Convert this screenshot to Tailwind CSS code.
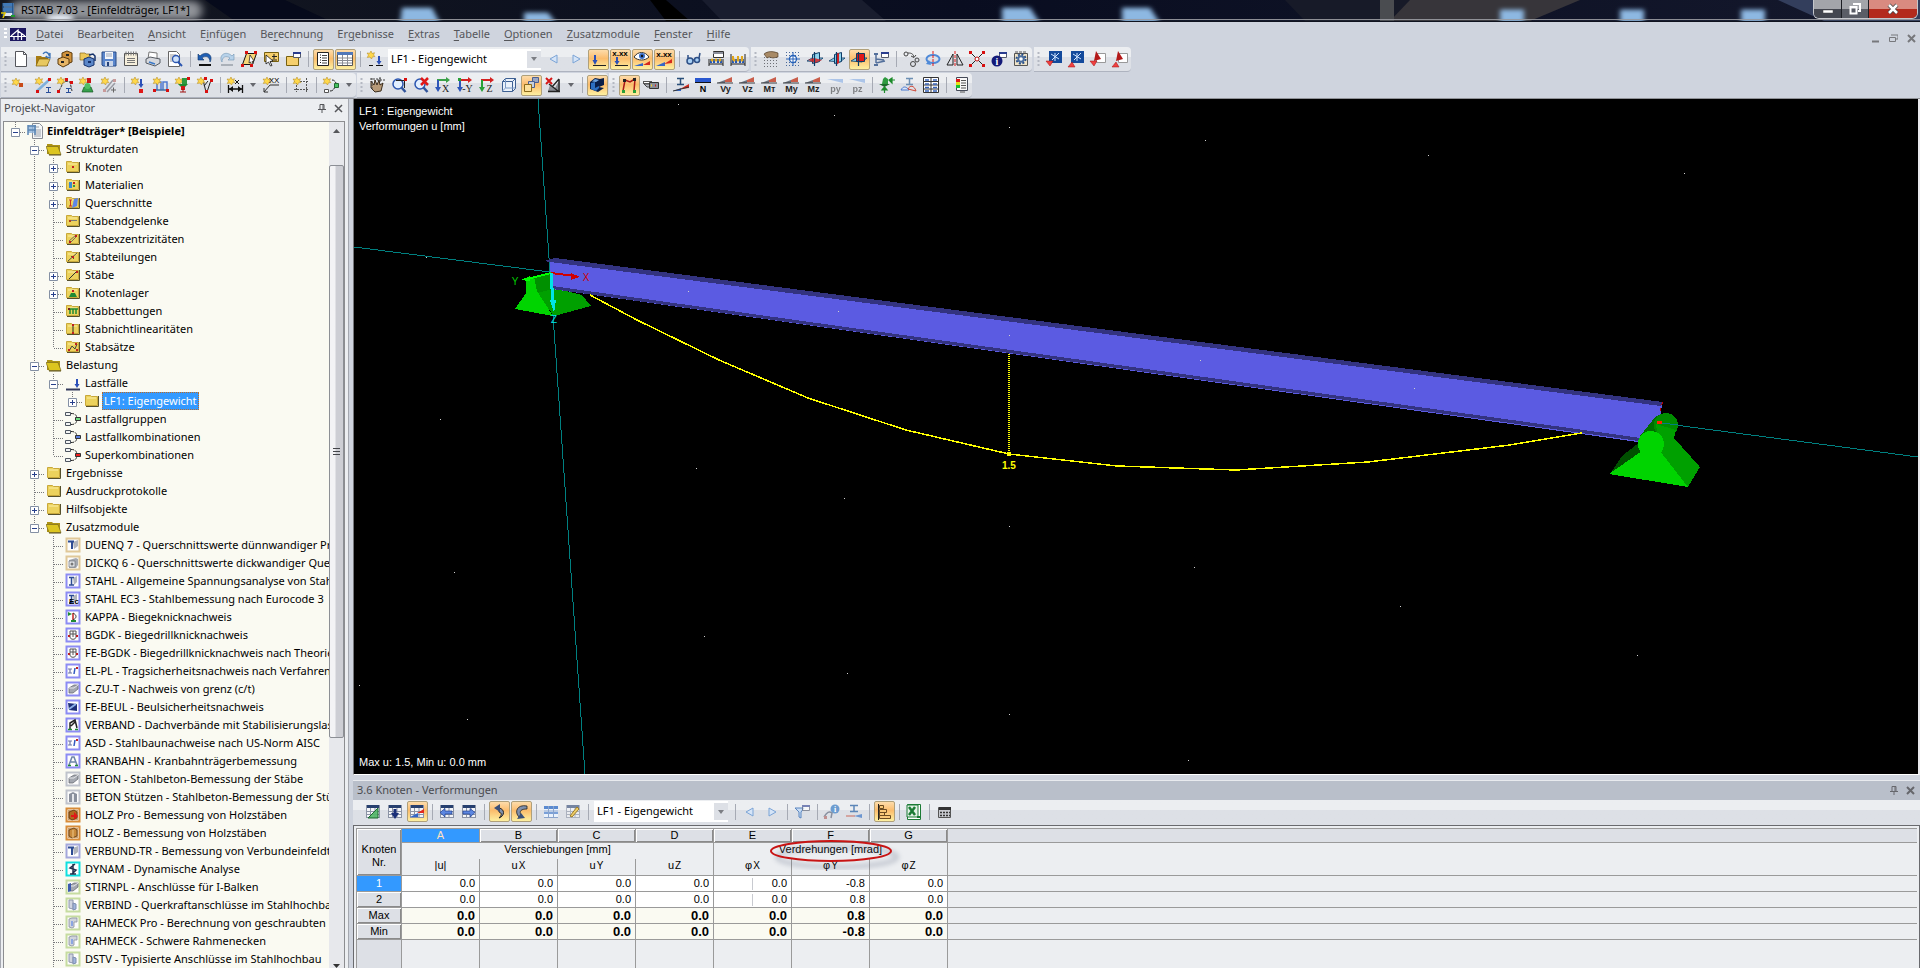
<!DOCTYPE html>
<html lang="de">
    <head>
        <meta charset="UTF-8">
        <meta name="viewport" content="width=device-width, initial-scale=1">
        <title>RSTAB 7.03 - [Einfeldträger, LF1*]</title>
        <script src="https://cdn.jsdelivr.net/npm/@tailwindcss/browser@4"></script>
    </head>
    <body class="h-screen flex flex-col overflow-hidden bg-[#cfd4de] font-['Noto_Sans','Open_Sans',sans-serif] text-[11px] text-black">
        <!-- Title bar -->
        <header class="relative h-[22px] shrink-0 overflow-hidden bg-linear-to-r from-[#14171f] via-[#090d20] to-[#14182c] border-b border-[#10131f]">
            <svg class="absolute inset-0 w-full h-full" viewBox="0 0 1920 22" preserveAspectRatio="none" aria-hidden="true">
                <defs>
                    <filter id="soft" x="-30%" y="-50%" width="160%" height="200%"><feGaussianBlur stdDeviation="2.500"/></filter>
                    <filter id="wide" x="-20%" y="-80%" width="140%" height="260%"><feGaussianBlur stdDeviation="4"/></filter>
                </defs>
                <path d="M205 0h80l45 22H235z" fill="#060a1b"/>
                <path d="M650 0h16l24 22h-24z" fill="#000"/>
                <path d="M702 0h160l24 22H722z" fill="#191d2e"/>
                <path d="M1285 0h160l-40 22h-100z" fill="#171a28"/>
                <path d="M1410 0h170l-50 22H1390z" fill="#37353a"/>
                <path d="M1380 0h14v22h-14z" fill="#4a4c50"/>
                <path d="M1778 0h142v22h-96z" fill="#333e5c"/>
                <g filter="url(#soft)" fill="#8db8e2">
                    <path d="M402 8h30l8 16h-40z"/>
                    <path d="M524 13h24l8 11h-32z"/>
                    <path d="M1002 8h28l10 16h-38z"/>
                    <path d="M1122 8h28l10 16h-38z"/>
                    <path d="M1500 10h24v14h-24z"/>
                    <path d="M1620 10h24v14h-24z"/>
                    <path d="M1741 10h24v14h-24z"/>
                </g>
                <rect x="10" y="1" width="192" height="20" rx="9" fill="#909398" filter="url(#wide)"/>
                <ellipse cx="60" cy="19" rx="14" ry="4" fill="#e8eef6" filter="url(#soft)"/>
                <path d="M0 20.500h1920" stroke="#9a9ba0"/>
            </svg>
            <div class="relative flex h-5 items-center justify-between">
                <h1 class="flex items-center gap-[5px] leading-5">
                    <svg class="w-4 h-4" viewBox="0 0 16 16" aria-hidden="true">
                        <path d="M3 1h11v13H3z" fill="#dfe8f4"/>
                        <path d="M4 1h9v3H4zM4 6h9v3H4z" fill="#3f79b8"/>
                        <path d="M3 1v13M13 1v13M3 5h10M3 10h10" stroke="#1d4c82" stroke-width="1.500" fill="none"/>
                        <path d="M11 14h4" stroke="#1f9a2f" stroke-width="2"/>
                        <path d="M1 11h4l-2 5" stroke="#e0c400" stroke-width="1.500" fill="none"/>
                    </svg>
                    <span>RSTAB 7.03 - [Einfeldträger, LF1*]</span>
                </h1>
                <div class="flex h-[19px] self-start mr-0.5 rounded-b-md border border-t-0 border-[#c5c7cc] overflow-hidden">
                    <button aria-label="Minimieren" class="w-[28px] flex justify-center items-center bg-linear-to-b from-[#a3a5aa] from-50% to-[#43464f] to-50% border-r border-[#1c1e24]"><svg class="w-3 h-3" viewBox="0 0 12 12"><path d="M1 7h10v3H1z" fill="#fff" stroke="#444" stroke-width=".5"/></svg></button>
                    <button aria-label="Wiederherstellen" class="w-[27px] flex justify-center items-center bg-linear-to-b from-[#a3a5aa] from-50% to-[#5a5d66] to-50% border-r border-[#1c1e24]"><svg class="w-3 h-3" viewBox="0 0 12 12"><path d="M4 1h7v7h-2M1.500 4h6v6.500h-6z" fill="none" stroke="#fff" stroke-width="2"/></svg></button>
                    <button aria-label="Schließen" class="w-[48px] flex justify-center items-center bg-linear-to-b from-[#d98a80] from-50% to-[#b32a1c] to-50%"><svg class="w-3 h-3" viewBox="0 0 12 12"><path d="M2 2l8 8M10 2l-8 8" stroke="#444" stroke-width="4"/><path d="M2 2l8 8M10 2l-8 8" stroke="#fff" stroke-width="2.500"/></svg></button>
                </div>
            </div>
        </header>

        <!-- Menu -->
        <nav class="flex h-6 shrink-0 items-center pl-1 text-[#55565a]">
            <svg class="w-[3px] h-3 mr-[3px]" viewBox="0 0 3 12" aria-hidden="true"><path d="M1.500 0v12" stroke="#fff" stroke-width="3" stroke-dasharray="2 2"/></svg>
            <svg class="w-4 h-[13px] mr-[3px]" viewBox="0 0 16 13" aria-hidden="true">
                <path d="M0 0h16v13H0z" fill="#1b1660"/>
                <path d="M0 8.500h16M1 8l7-6v10M8 3l7 5M11.500 5v7M4 8v4" stroke="#fff" stroke-width="1.200" fill="none"/>
            </svg>
            <div id="menu" class="flex"></div>
            <div class="ml-auto mr-1 mt-2 flex gap-[9px]">
                <button aria-label="Fenster minimieren"><svg class="block w-[8px] h-[9px]" viewBox="0 0 8 9"><path d="M0 7.500h7" stroke="#77787c" stroke-width="2"/></svg></button>
                <button aria-label="Fenster wiederherstellen"><svg class="block w-[9px] h-[9px]" viewBox="0 0 9 9"><path d="M2 1h7v4H7M.5 3.500h6v4h-6z" fill="none" stroke="#77787c"/></svg></button>
                <button aria-label="Fenster schließen"><svg class="block w-[9px] h-[9px]" viewBox="0 0 9 9"><path d="M1 1l7 7M8 1L1 8" stroke="#77787c" stroke-width="2"/></svg></button>
            </div>
        </nav>

        <!-- Toolbars -->
        <div id="toolbar1" class="flex h-[26px] shrink-0 gap-0.5 pl-px pt-px"></div>
        <div id="toolbar2" class="flex h-[26px] shrink-0 gap-px pl-px pt-px"></div>

        <main class="flex grow min-h-0 border-t border-[#8f9196]">
            <!-- Navigator -->
            <aside class="w-[349px] shrink-0 flex flex-col bg-[#eceef1] border-l border-r border-[#a5a8b0]">
                <div class="flex h-[19px] mb-[3px] shrink-0 items-center justify-between pl-[3px] pr-[5px] text-[#4a4b50]">
                    <h2>Projekt-Navigator</h2>
                    <div class="flex gap-2 items-center">
                        <button aria-label="Anheften"><svg class="block w-2 h-[9px]" viewBox="0 0 8 9"><path d="M2 0.500h4v5H2zM5 0v6M0 5.500h8M4 6v3" stroke="#55565a" fill="none"/></svg></button>
                        <button aria-label="Navigator schließen"><svg class="block w-[9px] h-[9px]" viewBox="0 0 9 9"><path d="M1 1l7 7M8 1L1 8" stroke="#55565a" stroke-width="1.500"/></svg></button>
                    </div>
                </div>
                <div class="grow min-h-0 flex ml-[2px] mr-[3px] border border-b-0 border-[#8c8d90] bg-[#fafaf2]">
                    <ul id="tree" class="grow min-w-0 overflow-hidden pl-0.5"></ul>
                    <div class="w-[15px] shrink-0 flex flex-col bg-[#e7e8ec]" aria-hidden="true">
                        <svg class="w-[15px] h-[43px]" viewBox="0 0 15 43"><path d="M4 11l3.500-4 3.500 4z" fill="#55565a"/></svg>
                        <div class="h-[573px] flex items-center justify-center border border-[#8c8f95] rounded-xs bg-linear-to-r from-[#f3f3f5] from-35% to-[#cdced4] to-50%">
                            <svg class="w-[7px] h-2" viewBox="0 0 7 8"><path d="M0 .5h7M0 3.500h7M0 6.500h7" stroke="#44454a"/></svg>
                        </div>
                        <svg class="w-[15px] h-[6px] mt-auto" viewBox="0 0 15 6"><path d="M4 2h7L7.500 6z" fill="#333"/></svg>
                    </div>
                </div>
            </aside>

            <div class="grow min-w-0 flex flex-col pl-1">
                <!-- 3D view -->
                <section class="relative grow min-h-0 bg-black border-l border-[#77787c] border-r-2 border-r-[#e8e9ec] border-b border-b-white font-['Liberation_Sans',sans-serif] text-white">
                    <svg class="absolute inset-0 w-full h-full" viewBox="354 99 1564 675" shape-rendering="crispEdges" role="img" aria-label="Einfeldträger mit Biegelinie">
                        <g stroke="#008080" fill="none">
                            <path d="M538 99L550 272L585 774"/>
                            <path d="M354 247L550 272M1660 423L1918 457"/>
                        </g>
                        <!-- left support -->
                        <path d="M537 293l18-5 27 7 9 11-37 10z" fill="#00a000"/>
                        <path d="M533 277l19-4 5 6v9l-20 5z" fill="#009000"/>
                        <path d="M526 279l8-2 3 14 16 25-38-7 11-16z" fill="#00d400"/>
                        <!-- beam -->
                        <path d="M550 260L1662 404L1660 421L1638 442L551 289z" fill="#5b5be2"/>
                        <path d="M544 261l11-3L1663 402l-2 4L550 262z" fill="#333380"/>
                        <path d="M552 286L1641 438l-2 3L552 289z" fill="#333380"/>
                        <path d="M1663 402l-2 5v12" fill="none" stroke="#c00000" stroke-dasharray="3 3"/>
                        <!-- deflection line -->
                        <path d="M590 295L637 320L719 360L808 398L906 430L1009 454L1117 466L1236 470L1368 462L1510 445L1582 433" fill="none" stroke="#ffff00" stroke-width="1.500"/>
                        <path d="M1009 354v99" stroke="#ffff00" stroke-width="2" stroke-dasharray="1 1"/>
                        <path d="M1007 452h4v4h-4z" fill="#ffff00"/>
                        <text x="1009" y="469" text-anchor="middle" font-size="10" font-weight="700" fill="#ffff00">1.5</text>
                        <!-- axes -->
                        <path d="M551 273l-24 6" stroke="#00ff00" stroke-width="2"/>
                        <path d="M521 280l9-4v5z" fill="#00ff00"/>
                        <path d="M551 273l24 3" stroke="#d00000" stroke-width="2"/>
                        <path d="M571 273l9 4-9 3z" fill="#d00000"/>
                        <path d="M551 273l2 30" stroke="#00e5e5" stroke-width="3"/>
                        <path d="M550 300h6l-2 13z" fill="#00e5e5"/>
                        <g font-size="10" text-anchor="middle">
                            <text x="515" y="285" fill="#00d000">Y</text>
                            <text x="586" y="281" fill="#d00000">X</text>
                            <text x="554" y="323" fill="#00e5e5">Z</text>
                        </g>
                        <!-- right support -->
                        <path d="M1640 442l-18 14-12 18 32-20z" fill="#005000"/>
                        <path d="M1640 436l16-20 10-3 6 4-10 32z" fill="#006e00"/>
                        <circle cx="1666" cy="425" r="12" fill="#008c00"/>
                        <path d="M1656 424l20 6 -2 8 26 29-12 20-28-35z" fill="#00a000"/>
                        <path d="M1642 451h18l28 36-79-13z" fill="#00d400"/>
                        <circle cx="1651" cy="444" r="13" fill="#00d400"/>
                        <path d="M1657 421h5v3h-5z" fill="#ff2000"/>
                        <path d="M1662 423l16 2" stroke="#008080"/>
                        <g id="grid" fill="#d0d0d0"></g>
                    </svg>
                    <div class="absolute left-[5px] top-[5px] leading-[15px]">
                        <p>LF1 : Eigengewicht</p>
                        <p>Verformungen u [mm]</p>
                    </div>
                    <p class="absolute left-[5px] bottom-1 leading-[15px]">Max u: 1.5, Min u: 0.0 mm</p>
                </section>

                <!-- Result table -->
                <section class="h-[193px] shrink-0 flex flex-col pt-[5px]">
                    <div class="flex h-[20px] shrink-0 items-center justify-between bg-[#b9bfca] border-t border-[#e8eaee] pl-1 pr-[5px] text-[#4a4b50]">
                        <h2>3.6 Knoten - Verformungen</h2>
                        <div class="flex gap-2 items-center">
                            <button aria-label="Tabelle anheften"><svg class="block w-2 h-[9px]" viewBox="0 0 8 9"><path d="M2 0.500h4v5H2zM5 0v6M0 5.500h8M4 6v3" stroke="#66676c" fill="none"/></svg></button>
                            <button aria-label="Tabelle schließen"><svg class="block w-[9px] h-[9px]" viewBox="0 0 9 9"><path d="M1 1l7 7M8 1L1 8" stroke="#66676c" stroke-width="2"/></svg></button>
                        </div>
                    </div>
                    <div id="toolbar3" class="flex h-[25px] shrink-0 bg-linear-to-b from-[#eceef1] from-40% to-[#dde0e6] to-40%"></div>
                    <div class="grow min-h-0 overflow-hidden border-t border-l border-r border-[#696a6e] bg-[#eceef1] p-0.5 pb-0 font-['Liberation_Sans',sans-serif]">
                        <table class="w-full h-[148px] table-fixed border-separate border-spacing-0 border-t border-l border-[#9a9a9a] text-center leading-[13px] [&_th]:font-normal [&_th]:p-0 [&_td]:p-0 [&_th]:border-[#9a9a9a] [&_td]:border-[#9a9a9a]">
                            <colgroup>
                                <col class="w-[45px]">
                                <col class="w-[78px]" span="7">
                                <col>
                            </colgroup>
                            <thead id="head"></thead>
                            <tbody id="rows"></tbody>
                        </table>
                    </div>
                </section>
            </div>
        </main>

        <script>
            // ---------- icon parts ----------
            const star = '<path d="M4 0l1 2.500 2.500-.8L6.500 4 8 5.500l-2.500.3L4.500 8 3 6 .3 6.500 1.500 4 0 2l2.700.3z" fill="#ffd84a" stroke="#b8902c" stroke-width=".6"/>'
            const sq = (x, y, c = '#d81010') => `<path d="M${x} ${y}h3v3h-3z" fill="${c}"/>`
            const grid = '<path d="M1 1h14v13H1z" fill="#f4f5f8"/><path d="M1 1h14v3H1z" fill="#27406f"/><path d="M1.500 1v13M5.500 4v10M10 4v10M14.500 1v13M1 7.500h14M1 10.500h14M1 13.500h14" stroke="#8b93a5" fill="none"/>'
            const dots = '<path d="M1 6.500h15M1 9.500h15M1 12.500h15M1 15.500h15" stroke="#6e7076" stroke-dasharray="1 2"/>'
            const slope = (a = '#3467c8', b = '#c62a20') => `<path d="M0 6h8V3z" fill="${a}"/><path d="M8 5h7V0L8 3z" fill="${b}" opacity=".8"/><path d="M0 6h16" stroke="#3b3c40"/>`
            const force = (t, pale) => `<g opacity="${pale ? .5 : 1}">${pale ? '<path d="M0 2h16v4z" fill="#6c9ce0"/>' : slope('#6d747f', '#c03a22')}<text x="8.500" y="15" font-size="9" font-weight="700" text-anchor="middle" font-family="Liberation Sans" fill="#222">${t}</text></g>`
            const view = (t, a, b) => `<path d="M2 3h11" stroke="${a}" stroke-width="2"/><path d="M11 0l4 3-4 3z" fill="${a}"/><path d="M3 3v9" stroke="${b}" stroke-width="2"/><path d="M0 10h6l-3 5z" fill="${b}"/><text x="10.500" y="15" font-size="10" text-anchor="middle" font-family="Liberation Serif" fill="#222">${t}</text>`
            const loads = '<path d="M1 15V8M15 15V8M1 13h14" stroke="#222"/><path d="M3 8v4M6 8v4M10 8v4M13 8v4" stroke="#2257b8" stroke-width="2"/><circle cx="4" cy="9" r="1.500" fill="#e2a81a"/><circle cx="8" cy="9" r="1.500" fill="#e2a81a"/><circle cx="12" cy="9" r="1.500" fill="#e2a81a"/>'
            const plane = '<path d="M5.500 3.500l7-2v9l-7 2z" fill="#8fd4ee" stroke="#0c3b66"/>'
            const cube = (body) => `<path d="M0 10l5-3h11l-5 4z" fill="#8fd4ee" stroke="#0c3b66" stroke-width=".8"/>${body}<path d="M7.500 1v14" stroke="#0c3b66" stroke-width="1.200"/>`
            const lens = '<circle cx="7" cy="7" r="5" fill="#e2efff" stroke="#2a55b0" stroke-width="1.500"/><path d="M10.500 10.500l4 4.500" stroke="#31549c" stroke-width="2.500"/>'
            const win = '<path d="M8.500 1.500h7v5h-7z" fill="#fff" stroke="#555a6c"/><path d="M8 1h8v2H8z" fill="#2a3d8f"/>'
            const combo = c => `<path d="M.5 1.500h5v3h-5zM.5 11.500h5v3h-5z" fill="#f2f4f4" stroke="#4d5560"/><path d="M6 2.500c5 0 5 2 6 4M6 13.500c5 0 5-2 6-4" fill="none" stroke="#222" stroke-dasharray="3 1"/><path d="M10.500 6.500h5v3h-5z" fill="${c}" stroke="#333"/>`

            const icons = {
                neu: '<path d="M2.500 .5h8l3 3v12h-11z" fill="#fff" stroke="#55565c"/><path d="M10.500 .5v3h3" fill="none" stroke="#55565c"/>',
                oeffnen: '<path d="M1 5h5l1 1h6v9H1z" fill="#a87c12"/><path d="M1 15l3-7h11l-3 7z" fill="#e8c860" stroke="#7c5e10" stroke-width=".7"/><path d="M8 3c2-3 5-2 6 1l1-2v5l-4-1 1-1" fill="none" stroke="#3b73b8" stroke-width="1.300"/>',
                schrank: '<path d="M5 2l5-2 5 2v9l-5 2-5-2z" fill="#d0923c" stroke="#5b3a0c"/><path d="M1 8l5-2 6 2v5l-6 3-5-3z" fill="#e7b566" stroke="#5b3a0c"/><path d="M4 11h3M9 4h3" stroke="#222" stroke-width="2"/>',
                verwalten: '<path d="M1 2h5l1 1h4v6H1z" fill="#ecc858" stroke="#8a6c1a" stroke-width=".7"/><path d="M5 8l5-2 5 2v6l-5 2-5-2z" fill="#5a86c8" stroke="#14316c"/><path d="M10 4l4-1 2 2v5" fill="none" stroke="#14316c" stroke-width="1.500"/><path d="M9 11h3" stroke="#14316c" stroke-width="2"/>',
                speichern: '<path d="M1 1h14v14H2l-1-1z" fill="#5a86cc" stroke="#294a86"/><path d="M4 1h8v7H4z" fill="#f4f6fa"/><path d="M5 3h6M5 5h6" stroke="#9aa6ba"/><path d="M4 10h8v5H4z" fill="#c8d4e8"/><path d="M6 11h2v4H6z" fill="#24417a"/>',
                protokoll: '<path d="M1.500 2.500h13v12h-13z" fill="#f6efdc" stroke="#555"/><path d="M3 .5v4M5.500 .5v4M8 .5v4M10.500 .5v4M13 .5v4" stroke="#777"/><path d="M4 7.500h8M4 9.500h8M4 11.500h8" stroke="#777"/>',
                drucken: '<path d="M4 1l8 1v6H3z" fill="#fff" stroke="#777"/><path d="M1 8l4-2 10 2v4l-5 3-9-3z" fill="#d6d8dd" stroke="#555a62"/><path d="M4 11l6 2" stroke="#3a78c8" stroke-width="1.500"/>',
                vorschau: '<path d="M1.500 .5h8l3 3v12h-11z" fill="#fff" stroke="#666"/><path d="M3 4h6M3 6h4M3 8h3M3 10h3" stroke="#999"/><circle cx="9" cy="8" r="3.500" fill="#cfe2fa" stroke="#2a55b0" stroke-width="1.300"/><path d="M11 11l4 4" stroke="#2a55b0" stroke-width="2"/>',
                undo: '<path d="M1 3v6h6L5 7c4-3 8-1 8 4 4-7-4-12-10-6z" fill="#1f5fb4" stroke="#0f3468" stroke-width=".6"/><path d="M2 14h12" stroke="#111" stroke-width="2"/>',
                redo: '<path d="M15 3v6H9l2-2C7 4 3 6 3 11-1 4 7-1 13 5z" fill="#b7d2ea" stroke="#6f93b4" stroke-width=".6"/><path d="M2 14h12" stroke="#aab0b8" stroke-width="2"/>',
                ebene: '<path d="M5.500 2.500h10l-4 11h-10z" fill="#f8d678" stroke="#111"/><path d="M9 4l4 6-2 .5 1 2.500-1.500.5-1-2.500L8 12z" fill="#fff" stroke="#111" stroke-width=".7"/>' + sq(0, 13) + sq(4, 0) + sq(13, 0) + sq(9, 13),
                auswahl: '<path d="M1.500 1.500h14v9h-14z" fill="#f6cf6c" stroke="#776010"/><path d="M11 3v5M9 5.500h5M9 9h5" stroke="#222"/><path d="M3 4l7 6-3 .5 2 4-1.500.5-2-4L3 13z" fill="#fff" stroke="#111" stroke-width=".8"/>',
                fenster: '<path d="M1.500 5.500h12v9h-12z" fill="#f6cf6c" stroke="#776010"/>' + win,
                liste: '<path d="M2.500 1.500h11v13h-11z" fill="#fff" stroke="#222"/><path d="M5 4h1M5 6.500h1M5 9h1M5 11.500h1" stroke="#222"/><path d="M7 4.500h5M7 7h5M7 9.500h5M7 12h5" stroke="#444"/>',
                tabelle: '<path d="M.5 1.500h15v13H.5z" fill="#fff" stroke="#555"/><path d="M0 1h16v3H0z" fill="#5177b8"/><path d="M1 7h14M1 9.500h14M1 12h14M5.500 4v10M10.500 4v10" stroke="#8a8c94"/>',
                lastfall: star + '<path d="M9 14.500h7M2 14.500h4" stroke="#111"/><path d="M12 5v6" stroke="#2b50b8" stroke-width="2"/><path d="M9.500 10h5L12 14z" fill="#2b50b8"/>',
                zurueck: '<path d="M11 4v8L4 8z" fill="#d5e4f7" stroke="#7ba4d6"/>',
                weiter: '<path d="M5 4v8l7-4z" fill="#d5e4f7" stroke="#7ba4d6"/>',
                last: '<path d="M3 14.500h13" stroke="#222"/><path d="M5 4v6" stroke="#2b50b8" stroke-width="2"/><path d="M2.500 9h5L5 14z" fill="#2b50b8"/>',
                lastwert: '<text x="8" y="5" font-size="8" font-weight="700" text-anchor="middle" font-family="Liberation Sans">x.xx</text><path d="M3 14.500h13" stroke="#222"/><path d="M5 6v5" stroke="#2b50b8" stroke-width="2"/><path d="M2.500 10h5L5 14z" fill="#2b50b8"/>',
                auge: '<path d="M0 6c4-6 11-6 15 0-4 4-11 4-15 0z" fill="#fff" stroke="#333"/><circle cx="8" cy="5" r="3" fill="#3b6fc8"/><circle cx="8" cy="5" r="1.200" fill="#111"/><path d="M0 15l9-3v3z" fill="#3467c8"/><path d="M9 14l7-4v4z" fill="#d42a1e"/>',
                wert: '<text x="8" y="6" font-size="8" font-weight="700" text-anchor="middle" font-family="Liberation Sans">x.xx</text><path d="M0 15l9-4v4z" fill="#3467c8"/><path d="M8 13l8-5v4z" fill="#d42a1e"/>',
                brille: '<circle cx="4" cy="10" r="3" fill="#a8d0f4" stroke="#2d4f86" stroke-width="1.500"/><circle cx="11" cy="9" r="2.500" fill="#a8d0f4" stroke="#2d4f86" stroke-width="1.500"/><path d="M2 7V4M13 7l1-5M7 9h2" stroke="#2d4f86" stroke-width="1.500" fill="none"/>',
                rechnen: loads + '<path d="M5.500 .5h10v6h-10z" fill="#fff" stroke="#333"/><path d="M5 1h10v2H5z" fill="#8c909c"/>',
                rechnen2: loads + '<path d="M1 3v5M15 3v5" stroke="#222"/><path d="M3 5v4M8 5v4M12 5v4" stroke="#e2a81a" stroke-width="2"/>',
                hand: dots + '<path d="M1 3c4-3 8-3 14-1v4l-5 1-4-1-2 1z" fill="#a88a66" stroke="#402e1a" stroke-width=".6"/>',
                raster: '<path d="M1 1.500h15M1 4.500h15M1 11.500h15M1 14.500h15" stroke="#4a6a9c" stroke-dasharray="1 2"/><circle cx="8" cy="8" r="3.500" fill="#fff" stroke="#2461b8" stroke-width="1.300"/><path d="M8 1v14M1 8h14" stroke="#2461b8"/>',
                xy: cube(plane + '<path d="M1 9l6-2 8 2-7 3z" fill="#d42020" opacity=".85"/>'),
                xz: cube(plane + '<path d="M7 3l3-1v10l-3 2z" fill="#d42020"/>'),
                yz: cube('<path d="M5.500 2.500h8v8h-8z" fill="#e01818" stroke="#0c3b66"/>'),
                arbeit: win + '<path d="M3 4v8M3 8l8 1M3 12l9-2" stroke="#54709c" stroke-width="1.500"/><path d="M1 3h4M1 14h4" stroke="#54709c" stroke-width="2"/>',
                kopieren: '<circle cx="3" cy="3" r="2" fill="none" stroke="#444"/><circle cx="10" cy="13" r="2.500" fill="none" stroke="#444"/><circle cx="14" cy="9" r="2" fill="none" stroke="#444"/><path d="M5 2c4 0 5 1 6 4M8 5l3 1.500L13 4" fill="none" stroke="#444"/>',
                drehen: '<ellipse cx="8" cy="8" rx="6.500" ry="4" fill="none" stroke="#4f8ad8" stroke-width="2"/><path d="M4 9l2 5-5-1z" fill="#4f8ad8"/><path d="M8 0v16" stroke="#e01818" stroke-dasharray="3 1"/>',
                spiegeln: '<path d="M6 3v11H0zM10 3v11h6z" fill="none" stroke="#222"/><path d="M8 0v16" stroke="#e01818" stroke-dasharray="3 1"/>',
                teilen: '<path d="M2 2l12 12M14 2L2 14" stroke="#222"/>' + sq(0, 0) + sq(13, 0) + sq(0, 13) + sq(13, 13) + '<circle cx="8" cy="8" r="2" fill="#fff" stroke="#c01010"/>',
                info: win + '<circle cx="6" cy="10" r="5.500" fill="#141a78"/><text x="6" y="14" font-size="10" font-weight="700" text-anchor="middle" font-family="Liberation Serif" fill="#fff">i</text>',
                optionen: '<path d="M1.500 2.500h13v12h-13z" fill="#f0e4c8" stroke="#555"/><path d="M2 1h3M6 1h3M10 1h3" stroke="#555"/><circle cx="8" cy="8" r="4.500" fill="none" stroke="#28508c" stroke-width="2" stroke-dasharray="2 1.500"/><circle cx="8" cy="8" r="2.800" fill="#fff" stroke="#4a6c9c" stroke-width="2"/>',
                modulab: '<path d="M3 0h13v12H3z" fill="#134a9c"/><path d="M5 3l8 5M13 2L6 9M9 2v8" stroke="#cfe4ff"/><path d="M0 10h7l-3 5z" fill="#f04040" stroke="#a01010" stroke-width=".5"/>',
                modulauf: '<path d="M3 0h13v12H3z" fill="#134a9c"/><path d="M5 3l8 5M13 2L6 9M9 2v8" stroke="#cfe4ff"/><path d="M0 16h7l-3-5z" fill="#f04040" stroke="#a01010" stroke-width=".5"/>',
                pdfab: '<path d="M6.500 2.500h9v9h-9z" fill="#fff" stroke="#999"/><path d="M6 0l5 8-7 2z" fill="#b41818"/><path d="M0 10h7l-3 5z" fill="#f04040" stroke="#a01010" stroke-width=".5"/>',
                pdfauf: '<path d="M6.500 2.500h9v9h-9z" fill="#fff" stroke="#999"/><path d="M6 0l5 8-7 2z" fill="#b41818"/><path d="M0 16h7l-3-5z" fill="#f04040" stroke="#a01010" stroke-width=".5"/>',
                // second row
                knoten: '<g transform="translate(-1 1)">' + star + '</g><path d="M6 6h4v4H6z" fill="#c84a18"/>',
                stab: '<path d="M2 14L14 3" stroke="#7fb0dc" stroke-width="2.500"/>' + star + sq(1, 13) + sq(13, 1) + '<path d="M11 10.500h5M11 15.500h5M13.500 10v6" stroke="#2a4f9a"/>',
                rahmen: '<path d="M2 14l5-10 6 1 2 9" stroke="#333" fill="none" stroke-dasharray="3 1"/>' + star + sq(0, 13) + sq(8, 1) + sq(13, 4) + '<path d="M9 11.500h5M9 15.500h5M11.500 11v5" stroke="#2a4f9a"/>',
                lager: star + '<path d="M3 15l2-5h7l2 5z" fill="#37a04c" stroke="#175a24" stroke-width=".7"/><circle cx="8.500" cy="9" r="3" fill="#4fbf64"/><path d="M8 1h4v5H8z" fill="#c81818"/>',
                exz: '<path d="M3 14l9-11M6 15l8-9" stroke="#9a9ca4" stroke-width="1.500"/>' + star + sq(2, 12, '#c89a9a') + sq(12, 2, '#c89a9a') + '<path d="M10 13h5M12.500 10.500v5" stroke="#666"/>',
                knlast: star + '<path d="M10 2v6" stroke="#2b50b8" stroke-width="2"/><path d="M7.500 7h5L10 11z" fill="#2b50b8"/><path d="M8 12h4v4H8z" fill="#e01818"/>',
                stablast: '<path d="M4 13V5h4v8M10 13V5h4v8" fill="none" stroke="#5079d0" stroke-width="1.500"/><path d="M1 13h14" stroke="#3c6fa0" stroke-width="1.500"/>' + star + sq(0, 12) + sq(13, 12),
                zwang: star + '<path d="M3 7h10l-3 3H6z" fill="#1f8a30"/><path d="M6 9h4v4H6z" fill="#d01818"/><path d="M8 12v3M5 15h6" stroke="#a01010"/><path d="M7 1h5v6H7z" fill="#2f9a40"/>' + sq(12, 0),
                imp: '<path d="M6 3l3 12M14 3l-4 12M7 9l4-5" stroke="#222" fill="none"/>' + star + sq(7, 0) + sq(13, 2) + sq(8, 13),
                mass: '<path d="M1.500 8v8M15.500 8v8M2 12h14" stroke="#111" stroke-width="1.300"/><path d="M2 12l4-3v6zM15 12l-4-3v6z" fill="#111"/><path d="M8 3l4 4M12 3L8 7" stroke="#111"/>' + star,
                masstext: star + '<text x="11" y="6" font-size="8" text-anchor="middle" font-family="Liberation Sans">XX</text><path d="M7 8h9M7 8l-6 7M1 11v4h4" fill="none" stroke="#333"/>',
                hilfslinie: '<path d="M3.500 2v13M13.500 1v14M1 4.500h15M1 12.500h15" stroke="#555" stroke-dasharray="2 1"/>' + star,
                kombi: star + '<path d="M1.500 12.500h4v3h-4z" fill="#fff" stroke="#555"/><path d="M9 3c2 0 3 1 4 3M7 14c3 0 4-2 5-4" fill="none" stroke="#222" stroke-dasharray="3 1"/><path d="M11.500 6.500h4v4h-4z" fill="#46c060" stroke="#1f6a2f"/>',
                greifen: '<path d="M2 4l3 4 1-5 2 5 2-5 1 5 3-2-2 8-6 1-4-4z" fill="#b79a78" stroke="#3a2c1c"/><path d="M11 0v6M8 3h8M1 2h12M3 1v12" stroke="#444" stroke-dasharray="2 1"/>',
                zoom: lens + '<path d="M5 3.500h10M13.500 3v8" stroke="#222"/>' + sq(13, 1),
                zoomx: lens + '<path d="M8 1l7 7M15 1L8 8" stroke="#e01818" stroke-width="2.500"/>',
                vx: view('X', '#3aa048', '#2d55b8'),
                vy: view('-Y', '#d42020', '#2d55b8') + sq(1, 1, '#28a038'),
                vz: view('Z', '#d42020', '#28a038'),
                iso: '<path d="M1.500 4.500h10v10h-10zM1.500 4.500l3-3h10v10l-3 3M11.500 4.500l3-3" fill="#eaf1fa" stroke="#3d5f92"/><path d="M4.500 2v9l-3 3M5 11h9" fill="none" stroke="#7b99c4"/>',
                transp: '<path d="M9.500 .5h6v5h-6z" fill="#9aa6c4" stroke="#4a5f92"/><path d="M5.500 4.500h6v6h-6z" fill="#c8d0dc" stroke="#4a5f92"/><path d="M1.500 7.500h7v7h-7z" fill="#fbe09c" stroke="#8a6b1a"/>',
                kamera: '<path d="M5 8l5 3 5-9v12H3z" fill="#8a8d94"/><path d="M3 14.500h12M4 7l9 7M14 2v12M14 2L7 10" stroke="#222" stroke-width="1.300" fill="none"/><path d="M1 1l6 6M7 1L1 7" stroke="#d41818" stroke-width="2"/>',
                render: '<path d="M1 5l5-4 5 1 4-1v7l-5 2 5 1-6 4-8-3z" fill="#0a1f48"/><path d="M2 6l4-1v6l4-2v2l-3 3-5-2z" fill="#2c6fc0"/><path d="M6 2l4 1-3 2-4-.5z" fill="#6ca4e0"/>',
                biegung: '<path d="M2 14L4 3l5 2 5-3-1 12" fill="none" stroke="#a81818" stroke-width="1.500"/>' + sq(2, 2, '#222') + sq(12, 1, '#222') + sq(1, 13, '#28a038') + sq(12, 13, '#28a038'),
                anim: '<path d="M1 7h6v3H4z" fill="#b8bcc4" stroke="#444"/><path d="M0 4h9v3H0z" fill="#555"/><path d="M1 5.500h6" stroke="#fff"/><path d="M6.500 5.500h9v6h-9z" fill="#8c9098" stroke="#333"/><path d="M8 8.500h1" stroke="#f4d020" stroke-width="2"/><path d="M12 8.500h1" stroke="#d02020" stroke-width="2"/>',
                verf: '<path d="M4 1.500h7M4 7.500h7M7.500 1v7" stroke="#2a4f7a" stroke-width="1.500"/><path d="M0 14l8-3v3z" fill="#3467c8"/><path d="M7 12l9-5v4z" fill="#d42a1e"/><path d="M0 14l16-4" stroke="#333"/>',
                n: '<path d="M0 1h16v4H0z" fill="#2a58d0"/><path d="M0 5.500h16" stroke="#111"/><text x="8" y="15" font-size="9" font-weight="700" text-anchor="middle" font-family="Liberation Sans">N</text>',
                fvy: force('Vy'), fvz: force('Vz'), mt: force('Mт'), my: force('My'), mz: force('Mz'), py: force('py', 1), pz: force('pz', 1),
                reakt: '<path d="M4 2l2-2 3 2v5H3z" fill="#2f9a40"/><path d="M0 7h11L5.500 10z" fill="#1c6a2a"/><path d="M16 3h-6M13 1l-3 2 3 3zM5.500 16v-5M3 13l2.500-3L8 13z" stroke="#1c8a2a" fill="#1c8a2a" stroke-width="1.200"/>',
                spannung: '<path d="M5 1.500h7M5 7.500h7M8.500 1v7" stroke="#6c8fb4" stroke-width="1.500"/><path d="M0 13c2-4 5-4 8 0z" fill="#dbe7f8" stroke="#4a78d0"/><path d="M7 12c2-4 6-4 8 2z" fill="none" stroke="#d04a3a"/>',
                verlauf: '<path d="M.5 .5h15v15H.5zM8 0v16M0 4.500h16M0 8h16M0 12h16" fill="#fff" stroke="#333"/><path d="M2 3h4M10 3h4M2 7h4M10 7h4M2 10.500h4M10 10.500h4M2 14h4M10 14h4" stroke="#3460b8" stroke-width="1.500"/>',
                farben: '<path d="M3.500 .5h11v13h-11z" fill="#f8f8f8" stroke="#444a58"/><path d="M3 2h4v3H3z" fill="#e01818"/><path d="M3 5h4v3H3z" fill="#e8e018"/><path d="M3 8h4v3H3z" fill="#18c030"/><path d="M8 3.500h5M8 6h5M8 8.500h5M8 11h5M7 15h5" stroke="#555"/>',
                // table toolbar
                tab1: grid + '<path d="M3 14L13 4v10z" fill="#52b868" stroke="#1d6a30" fill-opacity=".9"/>',
                tab2: grid + '<path d="M8 5v5" stroke="#1a2f78" stroke-width="3"/><path d="M4 9h8l-4 6z" fill="#1a2f78"/>',
                tab3: grid + '<path d="M1 13l8-4v4z" fill="#3467c8"/><path d="M8 9l7-4v4z" fill="#e02a1e"/>',
                links: grid + '<path d="M1 8.500l5-4v2.500h7v3H6V13z" fill="#5c86e0" stroke="#1f3f8c" stroke-width=".7"/>',
                rechts: grid + '<path d="M14 8.500l-5-4v2.500H2v3h7V13z" fill="#5c86e0" stroke="#1f3f8c" stroke-width=".7"/>',
                vor: '<path d="M8 4c6 1 6 8 0 10 3-3 3-5 0-6z" fill="#8090ac" stroke="#222"/><path d="M9 0v8L3 4z" fill="#3a4f78"/>',
                nach: '<path d="M14 2C4 0 1 8 6 13l2-2C6 7 8 5 14 5z" fill="#8090ac" stroke="#222" stroke-width=".8"/><path d="M4 15l8-1-4-5z" fill="#3a4f78"/>',
                zeilen: '<path d="M1 2h14v12H1z" fill="#eaf2fc"/><path d="M1 2h14v3H1z" fill="#5a8ad0"/><path d="M1 9h14" stroke="#7aa0d8" stroke-width="2"/><path d="M5.500 2v12M10.500 2v12M1 13.500h14M1 7h14" stroke="#8aa4cc"/>',
                stift: '<g opacity=".6">' + grid + '</g><path d="M5 12l7-9 2 2-7 8z" fill="#f0cf68" stroke="#9a7b2a"/>',
                filter: '<path d="M1 4h9l-3 4v6l-2-1V8z" fill="#c8dcf4" stroke="#5a86c0"/><g opacity=".6">' + win + '</g>',
                infotab: '<circle cx="11" cy="5" r="4.500" fill="#6c9cd0"/><text x="11" y="8" font-size="8" font-weight="700" text-anchor="middle" font-family="Liberation Serif" fill="#fff">i</text><path d="M0 13c3-5 5-6 8-4l-1 5" fill="none" stroke="#8890a0" stroke-width="1.500"/>' + sq(0, 12, '#c09090'),
                verftab: '<path d="M4 1.500h8M4 7.500h8M8 1v7" stroke="#5c86b8" stroke-width="1.500"/><path d="M0 12h9" stroke="#d09088" stroke-width="1.500"/><path d="M8 12l8-2v4z" fill="#6c96d0"/>',
                extrem: '<path d="M2.500 0v16" stroke="#222"/><path d="M3.500 1.500h4v3h-4zM3.500 5.500h7v3h-7zM3.500 8.500h5v3h-5zM3.500 11.500h11v3h-11z" fill="#f8c878" stroke="#6b4a20"/>',
                excel: '<path d="M1.500 .5h13v15h-13z" fill="#fff" stroke="#1b7a34"/><path d="M1 1h11v12H1z" fill="#e3f2e6" stroke="#1b7a34"/><path d="M3 3l6 8M9 3l-6 8" stroke="#1b7a34" stroke-width="2.500"/><path d="M11 13h4" stroke="#1b7a34" stroke-width="2"/>',
                rechner: '<path d="M2.500 3.500h12v10h-12z" fill="#c8cad0" stroke="#555"/><path d="M3 3h12v3H3z" fill="#333"/><path d="M4 8.500h10M4 11.500h10" stroke="#333" stroke-width="1.500" stroke-dasharray="2 1"/>',
                // navigator
                modell: '<path d="M5.500 .5h7l3 3v12h-10z" fill="#f4f6f8" stroke="#888c94"/><path d="M7 4h5M7 7h7M7 9h7M7 11h7M7 13h7" stroke="#9aa0aa"/><path d="M1 2h8v8H1z" fill="#8fb4dc" opacity=".8"/><path d="M1 2v10M8 2v10M1 3h8M1 7h8" stroke="#5c86b4" stroke-width="1.500"/>',
                auf: '<path d="M1 3h5l1 1h7v9H1z" fill="#ac9216"/><path d="M0 5.500h12l3 8H3z" fill="#dcc520" stroke="#7b6a1c" stroke-width=".7"/><path d="M3 14h12" stroke="#5c5014"/>',
                ordner: '<path d="M1.500 2.500h5l1 1h6v9h-12z" fill="#ecd25c" stroke="#c8a83a"/><path d="M14.500 3v10.500H2" fill="none" stroke="#55502c"/><path d="M3 5h9" stroke="#fbeea4"/>',
                lf: '<path d="M1 14.500h14" stroke="#333a5c" stroke-width="2"/><path d="M12 4v6" stroke="#2b50b8" stroke-width="2"/><path d="M9.500 9h5L12 13z" fill="#2b50b8"/>',
                gruppe: combo('#6fdc80'), lfk: combo('#5c7fe0'), super: combo('#ee2222'),
            }
            const dot = (x, y, c = '#c02020') => `<path d="M${x} ${y}h2v2h-2z" fill="${c}"/>`
            const mark = {
                fKnoten: dot(7, 7), fMat: '<path d="M4 5h3v6H4z" fill="#3b8ad0"/>' + dot(8, 5) + dot(8, 8, '#2f9a40'),
                fQuer: '<path d="M9 4l4-1-1 8-5 2z" fill="#5c86e8"/><path d="M4 5h3M4 11h3M5.500 5v6" stroke="#c83020"/>',
                fGelenk: '<path d="M5 7.500h7" stroke="#777"/>' + dot(4, 7, '#b04020'), fExz: '<path d="M4 10l7-6M5 12l6-6" stroke="#555" stroke-width=".8"/>' + dot(10, 4) + dot(4, 10),
                fTeil: '<path d="M3 12l9-8M6 7l3 3" stroke="#333" stroke-width=".8"/>' + dot(7, 7), fStab: '<path d="M4 12l8-8" stroke="#333"/>' + dot(11, 4),
                fLager: '<path d="M4 12l2-4h4l2 4z" fill="#1f8a34"/>' + dot(7, 5), fBett: '<path d="M3 6h10M5 6v5M8 6v5M11 6v5" stroke="#1f8a34" stroke-width="1.500"/>' + dot(3, 5, '#702020'),
                fNicht: '<path d="M8 4v8" stroke="#222"/>' + dot(7, 3) + dot(7, 11), fSatz: '<path d="M4 12l3-5 3 3 2-5" stroke="#444" fill="none"/>' + dot(3, 10) + dot(10, 4) + dot(11, 10),
            }
            for (const key in mark) icons[key] = icons.ordner + mark[key]

            // module icons: coloured frame with a small drawing
            const bar = '<path d="M4 7l5-3 4 0v4l-5 4H4z" fill="#a4a8b0" stroke="#5c6068" stroke-width=".7"/><path d="M4 7h5l4-3" fill="none" stroke="#e4e6ea"/>'
            const ibeam = '<path d="M8 5l4-2v6l-3 3z" fill="#b0b4bc"/><path d="M4 4.500h5M4 12h5M6.500 4v8" stroke="#2d4c94" stroke-width="1.500"/>'
            const art = {
                t: '<path d="M8 5l5-2v6l-4 3z" fill="#b0b4bc"/><path d="M3 4.500h6M7 4v8" stroke="#2d4c94" stroke-width="2"/>',
                bar: bar, i: ibeam,
                hohl: '<path d="M4 5l7-2 2 1v6l-2 3H4z" fill="#a4a8b0"/><path d="M4 6h6v6H4z" fill="#e4e6ea" stroke="#70747c" stroke-width=".7"/><circle cx="7" cy="9" r="1.500" fill="#777"/>',
                ec: ibeam + '<text x="9" y="13" font-size="8" font-weight="700" text-anchor="middle" font-family="Liberation Sans">Ec</text>',
                k: '<path d="M8 4v9" stroke="#c02020" stroke-width="1.500"/><path d="M8 4c4 2 4 5 0 7" stroke="#333" fill="none"/><path d="M3 3l4 2-4 2zM6 11h5v2H6z" fill="#1f8a34"/>',
                m: '<path d="M5 4v6c0 3 6 3 6 0V4zM8 4v6M5 7h6" fill="none" stroke="#555"/>' + dot(3, 8) + dot(11, 8),
                e: '<path d="M3 6h4M3 10h4M5 6v4" stroke="#6c74a4" stroke-width="1.200"/><path d="M9 11l1-6" stroke="#3058c0" stroke-width="1.500" fill="none"/>' + dot(11, 4),
                beul: '<path d="M3 4l9 1v7l-8-1z" fill="#1d2f78"/><path d="M4 10l7-5" stroke="#8cb0e8" stroke-width="2"/>',
                verb: '<path d="M5 12V6l5-3 2 8M6 9l4-4" stroke="#222" fill="none" stroke-width="1.500"/><path d="M3 12.500h4M10 12.500h3" stroke="#1f8a34" stroke-width="1.500"/>',
                kran: '<path d="M4 12l3-8h2l3 8M5 9h6" fill="none" stroke="#6c84a8" stroke-width="1.500"/><path d="M3 12.500h3M10 12.500h3" stroke="#1f8a34" stroke-width="1.500"/>',
                stuetze: '<path d="M4 5l4-2 4 2v8H4z" fill="#8a909c"/><path d="M8 5v8" stroke="#e4e6ea" stroke-width="2"/>',
                holzpro: '<path d="M3 3h10v10H3z" fill="#c8a070"/><path d="M4 5l5-2 3 2v6l-5 2-3-2z" fill="#b06a20" stroke="#502c08" stroke-width=".7"/><path d="M6 8h3V5l4 4-4 4v-3H6z" fill="#e01818"/>',
                holz: '<path d="M3 3h10v10H3z" fill="#c8a070"/><path d="M4 5l5-2 3 2v6l-5 2-3-2z" fill="#c88a3c" stroke="#502c08" stroke-width=".7"/><path d="M8 5v8" stroke="#f0c888"/>',
                dyn: '<path d="M10 3L5 7l6 2-4 4M8 3v10M5 13h6" stroke="#22304c" fill="none" stroke-width="1.500"/>',
                platte: bar + '<path d="M3 5l3-1v8l-3 1z" fill="#3c5cb0"/>',
                blatt: '<path d="M4 3h4v9l-4-1z" fill="#d0d4e0" stroke="#9098b0"/><path d="M8 6l3 1v5l-3 1z" fill="#a0b4dc" stroke="#8090b0"/>',
                eck: '<path d="M4 4l3-1h5v4H9v5l-2 1-3-1z" fill="#d0d4dc" stroke="#888ea0" stroke-width=".8"/><path d="M7 6v5" stroke="#4878e8"/>',
            }
            const frame = (c, a) => `<path d="M1.500 1.500h13v13h-13z" fill="#fdfdfd" stroke="${c}" stroke-width="2"/>${art[a]}`

            const svg = (body, cls = 'block w-4 h-4 overflow-visible') => `<svg class="${cls}" viewBox="0 0 16 16" aria-hidden="true">${body}</svg>`

            // ---------- menu ----------
            document.getElementById('menu').innerHTML = ['_Datei', 'Bearbeite_n', '_Ansicht', 'E_infügen', 'Be_rechnung', 'Er_gebnisse', '_Extras', '_Tabelle', '_Optionen', '_Zusatzmodule', '_Fenster', '_Hilfe']
                .map(m => `<button class="px-[7px] h-6">${m.replace(/_(.)/, '<u class="underline-offset-2">$1</u>')}</button>`).join('')

            // ---------- toolbars ----------
            // "|" separator, "*" pressed, "v" drop-down arrow, "#" load case select
            const item = (t, id) => {
                if (t === '|') return '<span class="w-2 flex justify-center"><span class="w-px h-4 bg-[#a6aab4]"></span></span>'
                if (t === 'v') return '<button aria-label="Auswahl" class="w-[14px] h-5 flex justify-center items-center"><svg class="w-[6px] h-1" viewBox="0 0 6 4"><path d="M0 0h6L3 4z" fill="#66686e"/></svg></button>'
                if (t[0] === '#') return `<span class="relative ${id === 'toolbar3' ? 'w-[134px] ml-0.5 mr-[3px]' : 'w-[153px] mx-0.5'} h-[21px] bg-white">
                    <select aria-label="Lastfall" class="appearance-none w-full h-full pl-[3px] outline-none text-[11px]"><option>LF1 - Eigengewicht</option></select>
                    <span class="absolute right-0 top-0.5 bottom-0.5 w-[14px] bg-[#dde0e6] flex items-center justify-center pointer-events-none"><svg class="w-[6px] h-1" viewBox="0 0 6 4"><path d="M0 0h6L3 4z" fill="#7c7e84"/></svg></span></span>`
                const on = t[0] === '*'
                const key = on ? t.slice(1) : t
                return `<span class="w-[22px] flex justify-center"><button aria-label="${key}" class="${on ? 'w-[21px] h-[21px] flex items-center justify-center rounded-xs border border-[#b0a07a] bg-linear-to-b from-[#fddcaa] via-[#fbbc6c] via-45% to-[#fdf0a0]' : 'w-[21px] h-[21px] flex items-center justify-center'}">${svg(icons[key])}</button></span>`
            }
            const group = (names, id) => `<div class="flex items-center ${id === 'toolbar3' ? 'h-[23px] pl-[9px]' : 'h-[25px] rounded-r-sm border-b border-[#aeb3bf] bg-linear-to-b from-[#eceef1] from-40% to-[#dde0e6] to-40%'}">
                ${id === 'toolbar3' ? '' : '<svg class="w-[9px] h-4" viewBox="0 0 9 16" aria-hidden="true"><path d="M4.500 1v14" stroke="#b4b8c2" stroke-width="2" stroke-dasharray="2 2"/></svg>'}
                ${names.split(' ').map(t => item(t, id)).join('')}</div>`
            const bars = {
                toolbar1: ['neu oeffnen schrank verwalten speichern protokoll drucken vorschau | undo redo ebene auswahl fenster | *liste *tabelle | lastfall # zurueck weiter *last *lastwert *auge *wert | brille rechnen rechnen2',
                    'hand raster xy xz *yz arbeit | kopieren drehen spiegeln teilen info optionen', 'modulab modulauf pdfab pdfauf'],
                toolbar2: ['knoten stab rahmen lager exz | knlast stablast zwang imp | mass v masstext | hilfslinie | kombi v',
                    'greifen zoom zoomx vx vy vz iso *transp kamera v | *render', '*biegung anim | verf n fvy fvz mt my mz py pz | reakt spannung verlauf | farben'],
                toolbar3: ['tab1 tab2 *tab3 | links rechts | *vor *nach | zeilen stift | # | zurueck weiter | filter | infotab verftab | *extrem | excel | rechner'],
            }
            for (const id in bars) document.getElementById(id).innerHTML = bars[id].map(b => group(b, id)).join('')

            // ---------- navigator tree ----------
            // [guides, icon, label]: "v" line, " " empty, "t" tee, "l" corner, "+"/"-" box, "p"/"m" last box
            const B = '#8c8cf4', G = '#bfc3cc', L = '#c6dca0', T = '#e0c898', H = '#d88c38'
            const tree = [
                ['m', 'modell', 'Einfeldträger* [Beispiele]'],
                [' -', 'auf', 'Strukturdaten'], [' v+', 'fKnoten', 'Knoten'], [' v+', 'fMat', 'Materialien'], [' v+', 'fQuer', 'Querschnitte'],
                [' vt', 'fGelenk', 'Stabendgelenke'], [' vt', 'fExz', 'Stabexzentrizitäten'], [' vt', 'fTeil', 'Stabteilungen'], [' v+', 'fStab', 'Stäbe'],
                [' v+', 'fLager', 'Knotenlager'], [' vt', 'fBett', 'Stabbettungen'], [' vt', 'fNicht', 'Stabnichtlinearitäten'], [' vl', 'fSatz', 'Stabsätze'],
                [' -', 'auf', 'Belastung'], [' v-', 'lf', 'Lastfälle'], [' vvp', 'ordner', 'LF1: Eigengewicht'],
                [' vt', 'gruppe', 'Lastfallgruppen'], [' vt', 'lfk', 'Lastfallkombinationen'], [' vl', 'super', 'Superkombinationen'],
                [' +', 'ordner', 'Ergebnisse'], [' t', 'ordner', 'Ausdruckprotokolle'], [' +', 'ordner', 'Hilfsobjekte'], [' m', 'auf', 'Zusatzmodule'],
                ...[[T, 't', 'DUENQ 7 - Querschnittswerte dünnwandiger Profile'], [T, 'hohl', 'DICKQ 6 - Querschnittswerte dickwandiger Querschnitte'],
                    [B, 'i', 'STAHL - Allgemeine Spannungsanalyse von Stahlstäben'], [B, 'ec', 'STAHL EC3 - Stahlbemessung nach Eurocode 3'],
                    [B, 'k', 'KAPPA - Biegeknicknachweis'], [B, 'm', 'BGDK - Biegedrillknicknachweis'], [B, 'm', 'FE-BGDK - Biegedrillknicknachweis nach Theorie II. Ordnung'],
                    [B, 'e', 'EL-PL - Tragsicherheitsnachweis nach Verfahren Elastisch-Plastisch'], [B, 'bar', 'C-ZU-T - Nachweis von grenz (c/t)'], [B, 'beul', 'FE-BEUL - Beulsicherheitsnachweis'],
                    [B, 'verb', 'VERBAND - Dachverbände mit Stabilisierungslasten'], [B, 'e', 'ASD - Stahlbaunachweise nach US-Norm AISC'], [B, 'kran', 'KRANBAHN - Kranbahnträgerbemessung'],
                    [G, 'bar', 'BETON - Stahlbeton-Bemessung der Stäbe'], [G, 'stuetze', 'BETON Stützen - Stahlbeton-Bemessung der Stützen'],
                    [H, 'holzpro', 'HOLZ Pro - Bemessung von Holzstäben'], [H, 'holz', 'HOLZ - Bemessung von Holzstäben'], ['#a4a8dc', 't', 'VERBUND-TR - Bemessung von Verbundeinfeldträgern'],
                    ['#10e0e0', 'dyn', 'DYNAM - Dynamische Analyse'], [L, 'platte', 'STIRNPL - Anschlüsse für I-Balken'], [L, 'blatt', 'VERBIND - Querkraftanschlüsse im Stahlhochbau'],
                    [L, 'eck', 'RAHMECK Pro - Berechnung von geschraubten Rahmenecken'], [L, 'eck', 'RAHMECK - Schwere Rahmenecken'], [L, 'blatt', 'DSTV - Typisierte Anschlüsse im Stahlhochbau'],
                ].map(([c, a, text]) => ['  t', frame(c, a), text]),
            ]
            const guide = g => {
                let out = ''
                if ('vt+-'.includes(g)) out += '<path d="M9.500 0v18"/>'
                if ('lpm'.includes(g)) out += '<path d="M9.500 0v10"/>'
                if ('tl+-pm'.includes(g)) out += '<path d="M10 10.500h9"/>'
                out = `<g stroke="#77787c" stroke-dasharray="1 1">${out}</g>`
                if ('+-pm'.includes(g)) out += '<path d="M5.500 6.500h8v8h-8z" fill="#fff" stroke="#8490a4"/><path d="M7 10.500h5" stroke="#27408c"/>'
                if ('+p'.includes(g)) out += '<path d="M9.500 8v5" stroke="#27408c"/>'
                return `<svg class="w-[19px] h-[18px] shrink-0" viewBox="0 0 19 18" aria-hidden="true">${g === ' ' ? '' : out}</svg>`
            }
            document.getElementById('tree').innerHTML = tree.map(([g, icon, text], i) => {
                const cls = i === 0 ? 'font-bold pl-0.5' : text.startsWith('LF1') ? 'bg-[#3399ff] text-white outline outline-dotted -outline-offset-1 outline-[#c06a20] px-0.5' : 'pl-0.5'
                return `<li class="flex items-center h-[18px] leading-[18px] whitespace-nowrap">${[...g].map(guide).join('')}${svg(icons[icon] || icon, 'w-4 h-4 shrink-0 mx-0.5')}<span class="${cls}">${text}</span></li>`
            }).join('')

            // ---------- work plane grid points ----------
            document.getElementById('grid').innerHTML = [[678, 104], [834, 115], [1009, 127], [1205, 140], [1428, 155], [1684, 173], [426, 257], [688, 291], [838, 311], [1009, 335], [1200, 360], [1414, 388],
                [440, 419], [696, 468], [844, 498], [1009, 526], [1194, 567], [1400, 606], [1637, 655], [454, 572], [704, 636], [847, 673], [1009, 714], [1188, 760], [467, 719], [359, 685]]
                .map(([x, y]) => `<path d="M${x} ${y}h1v1h-1z"/>`).join('')

            // ---------- result table ----------
            const raised = 'bg-[#dde0e6] border-r border-b shadow-[inset_1px_1px_#fff,inset_-1px_-1px_#8a8a8a]'
            const names = ['|u|', 'uX', 'uY', 'uZ', 'φX', 'φY', 'φZ']
            document.getElementById('head').innerHTML = `
                <tr class="h-[14px]">
                    <th rowspan="3" scope="col" class="${raised} align-top"><div class="pt-[14px] leading-[13px]">Knoten<br>Nr.</div></th>
                    ${[...'ABCDEFG'].map(c => `<th scope="col" class="${c === 'A' ? 'bg-[#3399ff] text-[#ffe0c0] border-r border-b' : raised}">${c}</th>`).join('')}
                    <td class="bg-[#dde0e6] border-b"></td>
                </tr>
                <tr class="h-4 align-top">
                    <th colspan="4" scope="colgroup" class="border-r">Verschiebungen [mm]</th>
                    <th colspan="3" scope="colgroup" class="border-r relative">
                        <svg class="absolute left-[54px] -top-[5px] w-[136px] h-[32px] pointer-events-none" viewBox="0 0 136 32" aria-hidden="true">
                            <ellipse cx="69" cy="19" rx="60" ry="10" fill="none" stroke="#55607a" stroke-width="4" opacity=".3" filter="url(#soft)"/>
                            <ellipse cx="63" cy="13" rx="60" ry="10" fill="none" stroke="#c81414" stroke-width="2"/>
                        </svg>
                        Verdrehungen [mrad]
                    </th>
                    <td></td>
                </tr>
                <tr class="h-[17px] align-top">${names.map(n => `<th scope="col" class="border-r border-b">${n === '|u|' ? n : `${n[0]}<span class="text-[10px] pl-px">${n[1]}</span>`}</th>`).join('')}<td class="border-b"></td></tr>`
            document.getElementById('rows').innerHTML = [
                ['1', '0.0', '0.0', '0.0', '0.0', '0.0', '-0.8', '0.0'], ['2', '0.0', '0.0', '0.0', '0.0', '0.0', '0.8', '0.0'],
                ['Max', '0.0', '0.0', '0.0', '0.0', '0.0', '0.8', '0.0'], ['Min', '0.0', '0.0', '0.0', '0.0', '0.0', '-0.8', '0.0'],
            ].map(([name, ...values], r) => `<tr class="h-4">
                <th scope="row" class="${r ? raised : 'bg-[#3399ff] text-white border-r border-b'}">${name}</th>
                ${values.map((v, c) => `<td class="border-r border-b text-right ${r > 1 ? 'bg-[#fafaf2] text-[13px] font-bold' : 'bg-white'}"><div class="flex justify-end items-center pr-1 h-[15px]">${c === 4 && r < 2 ? '<span class="w-px h-3 bg-[#c8cad0] mr-[19px]"></span>' : ''}${v}</div></td>`).join('')}
                <td class="border-b"></td>
            </tr>`).join('') + '<tr><th class="bg-[#dde0e6] border-r"></th>' + '<td class="border-r"></td>'.repeat(7) + '<td></td></tr>'
        </script>
    </body>
</html>
